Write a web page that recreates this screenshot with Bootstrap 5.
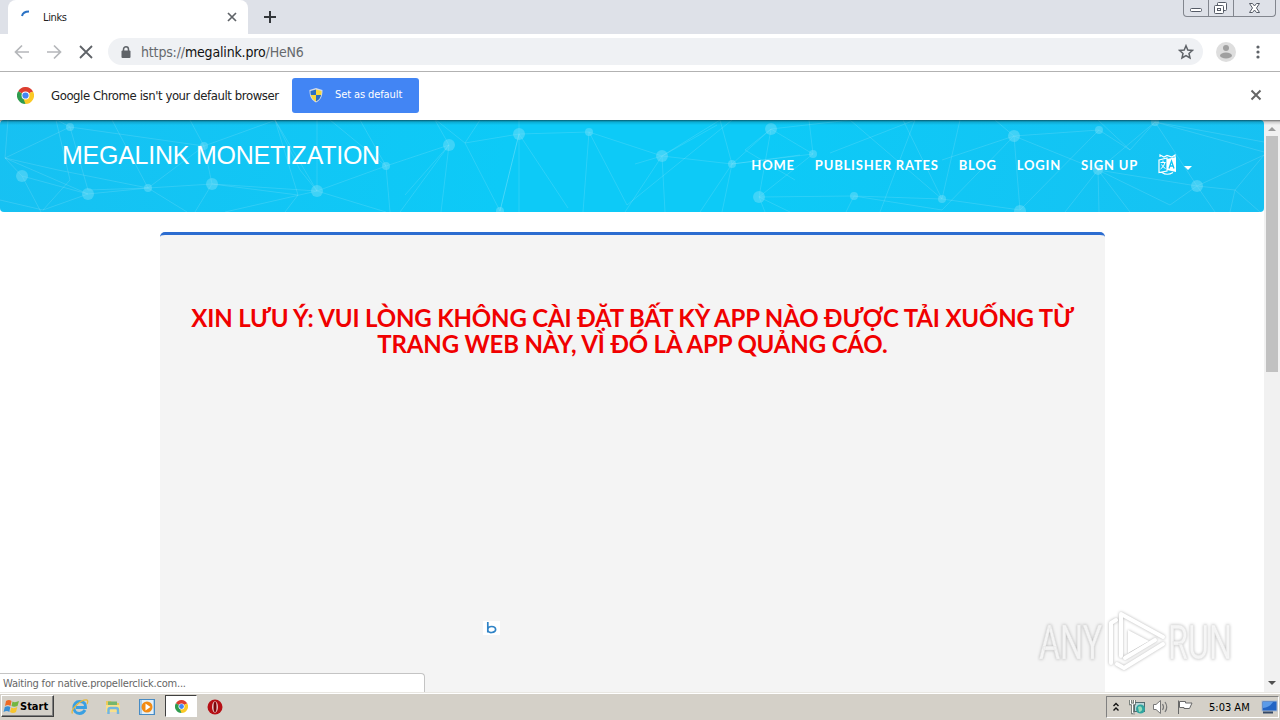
<!DOCTYPE html>
<html lang="vi">
<head>
    <meta charset="UTF-8">
    <meta name="viewport" content="width=device-width, initial-scale=1.0">
    <title>Links</title>
    <link href="https://cdn.jsdelivr.net/npm/bootstrap@5.3.1/dist/css/bootstrap.min.css" rel="stylesheet">
    <script src="https://cdn.jsdelivr.net/npm/bootstrap@5.3.1/dist/js/bootstrap.bundle.min.js"></script>
    <style>
        body { width: 1280px; height: 720px; font-family: "DejaVu Sans Condensed", "DejaVu Sans", sans-serif; font-size: 11px; line-height: 1; color: #222; }
        svg { display: block; flex-shrink: 0; }
        .tab-strip { height: 34px; background: #dee1e8; }
        .tab-item { width: 240px; height: 34px; margin-left: 8px; padding: 0 11px; border-radius: 8px 8px 0 0; background: #fff; }
        .tab-title { margin-left: 11px; letter-spacing: -.35px; }
        .win-buttons { width: 93px; height: 17px; margin-right: 4px; border: 1px solid #82868e; border-top: 0; border-radius: 0 0 4px 4px; }
        .win-buttons > span + span { border-left: 1px solid #82868e; }
        .toolbar { height: 38px; padding-bottom: 2px; border-bottom: 1px solid #b2b2b2; }
        .address { width: 1095px; height: 27px; margin-left: 14px; padding: 0 9px 0 12px; background: #eff1f4; font-size: 14px; letter-spacing: -.16px; color: #66696d; }
        .address b { font-weight: 400; color: #111; }
        .infobar { height: 48px; padding: 0 18px 2px 17px; font-size: 13px; }
        .info-text { width: 241px; margin-left: 17px; letter-spacing: -.42px; white-space: nowrap; }
        .default-btn { width: 127px; height: 35px; padding: 0 0 0 16px; border: 0; border-radius: 3px; background: #4285f4; color: #fff; font-size: 11px; --bs-btn-hover-bg: #3b78e7; }
        .default-btn span { margin-left: 11px; letter-spacing: -.1px; }
        .viewport { height: 572px; }
        .page-shadow { top: 0; left: 0; right: 0; height: 5px; z-index: 3; background: linear-gradient(rgba(0,0,0,.55), rgba(0,0,0,.15) 40%, transparent); }
        .site { width: 1264px; }
        .site-nav { height: 92px; border-radius: 4px; background: linear-gradient(100deg, #17c1f2, #0dcaf7 40%, #0dcaf7 60%, #17c1f2); padding: 0; }
        .site-nav .mesh { top: 0; left: 0; }
        .site-brand { position: relative; margin: -22px 0 0 62px; font: 25px/1 "Liberation Sans", sans-serif; letter-spacing: -.25px; color: #fff; white-space: nowrap; }
        .site-menu { position: relative; margin: -2px 72px 0 0; gap: 20px; font: 700 13px/1 Lato, sans-serif; letter-spacing: .8px; }
        .site-menu a { color: #fff; text-decoration: none; }
        .notice-box { width: 945px; height: 460px; margin: 20px 0 0 160px; border-top: 3px solid #2b6cd0; border-radius: 5px 5px 0 0; background: #f4f4f4; padding: 70px 30px 0; }
        .notice-box h3 { font: 700 24px/26.4px Lato, sans-serif; letter-spacing: -.16px; color: #f00000; }
        .ad-logo { left: 483px; top: 501px; width: 17px; height: 14px; background: #fff; }
        .scroller { width: 16px; background: #f1f1f1; }
        .scroll-thumb { width: 12px; height: 236px; background: #c1c1c1; }
        .status-tip { left: 0; bottom: 0; width: 425px; height: 19px; border: 1px solid #c4c4c4; border-left: 0; border-bottom: 0; border-top-right-radius: 4px; background: #fff; color: #666; padding: 4px 0 0 3px; letter-spacing: -.2px; }
        .watermark { left: 1037px; top: 488px; z-index: 4; }
        .taskbar { height: 28px; background: #d4d0c8; border-top: 1px solid #e9e7e2; box-shadow: inset 0 1px #fff; }
        .start-btn { width: 53px; height: 22px; margin: 2px 0 0 1px; padding-left: 1px; border: 1px solid; border-color: #fff #404040 #404040 #fff; box-shadow: inset -1px -1px #808080; font-weight: 700; color: #000; letter-spacing: 0; }
        .task-icons { margin-left: 17px; }
        .task-active { width: 32px; height: 22px; border: 1px solid; border-color: #404040 #fff #fff #404040; background: #fff; }
        .tray { width: 173px; height: 22px; margin: 3px 1px 0 auto; padding-left: 6px; border: 1px solid; border-color: #808080 #fff #fff #808080; color: #000; }
        .clock { width: 43px; letter-spacing: 0; white-space: nowrap; }
    </style>
</head>
<body class="d-flex flex-column overflow-hidden bg-white">

<svg width="0" height="0" class="position-absolute">
    <symbol id="chrome" viewBox="0 0 18 18">
        <path d="M9 9 1.2 4.5A9 9 0 0 1 16.8 4.5Z" fill="#dd3e30"/>
        <path d="M9 9 16.8 4.5A9 9 0 0 1 9 18Z" fill="#fbc926"/>
        <path d="M9 9 9 18A9 9 0 0 1 1.2 4.5Z" fill="#2f9c4e"/>
        <path d="M9 5H17L16.8 4.500H9Z" fill="#dd3e30"/>
        <path d="M12.500 11 9 18 7 13Z" fill="#fbc926"/>
        <circle cx="9" cy="9" r="4.200" fill="#fff"/>
        <circle cx="9" cy="9" r="3.300" fill="#4285f4"/>
    </symbol>
</svg>

<div class="tab-strip d-flex align-items-start">
    <div class="tab-item d-flex align-items-center">
        <svg width="13" height="14" viewBox="0 0 13 14"><path d="M3 6Q4 1.500 10 1.500" fill="none" stroke="#2a72c4" stroke-width="2"/></svg>
        <span class="tab-title">Links</span>
        <svg class="ms-auto" width="10" height="10" viewBox="0 0 10 10"><path d="M1 1 9 9M9 1 1 9" stroke="#5f6368" stroke-width="1.700"/></svg>
    </div>
    <svg class="mt-2 ms-3" width="12" height="16" viewBox="0 0 12 16"><path d="M6 3V15M0 9H12" stroke="#33363a" stroke-width="2"/></svg>
    <div class="win-buttons ms-auto d-flex">
        <span style="width:24px"><svg width="24" height="16"><rect x="6.500" y="8.500" width="11" height="3" rx="1" fill="#fff" stroke="#555b66"/></svg></span>
        <span style="width:25px"><svg width="24" height="16" fill="#fff" stroke="#555b66"><rect x="8.500" y="2.500" width="9" height="8" rx="1"/><rect x="5.500" y="5.500" width="9" height="8" rx="1"/><rect x="8.500" y="8.500" width="3" height="2"/></svg></span>
        <span class="flex-fill"><svg width="41" height="16"><path d="M15.500 3.500H18.500L20.500 6 22.500 3.500H25.500L22.500 8 25.500 12.500H22.500L20.500 10 18.500 12.500H15.500L18.500 8Z" fill="#fff" stroke="#555b66"/></svg></span>
    </div>
</div>

<div class="toolbar d-flex align-items-center">
    <svg width="94" height="34" viewBox="0 1 94 34" fill="none">
        <path d="M29 18H16M22 11.500 15.500 18 22 24.500M47 18H60M54 11.500 60.500 18 54 24.500" stroke="#b5b7ba" stroke-width="1.700"/>
        <path d="M80 12 92 24M92 12 80 24" stroke="#5f6368" stroke-width="1.800"/>
    </svg>
    <div class="address rounded-pill d-flex align-items-center">
        <svg width="12" height="14" viewBox="0 0 12 14"><path d="M3.500 7V4.500a2.500 2.700 0 0 1 5 0V7" fill="none" stroke="#5f6368" stroke-width="1.500"/><rect x="1.500" y="5.500" width="9" height="7.500" rx="1" fill="#5f6368"/></svg>
        <span style="margin-left:9px">https://<b>megalink.pro</b>/HeN6</span>
        <svg class="ms-auto" width="16" height="16" viewBox="0 0 16 16"><path d="M8 1.700 9.800 6 14.500 6.400 11 9.500 12 14 8 11.600 4 14 5 9.500 1.500 6.400 6.200 6Z" fill="none" stroke="#5f6368" stroke-width="1.500"/></svg>
    </div>
    <svg style="margin-left:12px" width="22" height="22" viewBox="0 0 22 22"><circle cx="11" cy="11" r="10" fill="#dedede"/><circle cx="11" cy="7" r="3" fill="#a0a0a0"/><ellipse cx="11" cy="14.500" rx="6" ry="3" fill="#a0a0a0"/></svg>
    <svg style="margin-left:18px" width="6" height="16" viewBox="0 0 6 16" fill="#5f6368"><circle cx="3" cy="3" r="1.600"/><circle cx="3" cy="8" r="1.600"/><circle cx="3" cy="13" r="1.600"/></svg>
</div>

<div class="infobar d-flex align-items-center">
    <svg width="17" height="17"><use href="#chrome"/></svg>
    <span class="info-text">Google Chrome isn't your default browser</span>
    <button type="button" class="default-btn btn d-flex align-items-center">
        <svg width="16" height="16" viewBox="0 0 16 16">
            <path d="M8 1 14.500 3C14.500 9 13 13 8 15.500 3 13 1.500 9 1.500 3Z" fill="#d5dce8"/>
            <path d="M8 2.500V8H2.800Q2.400 6 2.500 4Z" fill="#2c6fc2"/><path d="M8 2.500V8H13.200Q13.600 6 13.500 4Z" fill="#f8d73a"/>
            <path d="M8 8H2.800Q4 12.500 8 14.500Z" fill="#f8d73a"/><path d="M8 8H13.200Q12 12.500 8 14.500Z" fill="#2c6fc2"/>
        </svg>
        <span>Set as default</span>
    </button>
    <svg class="ms-auto" width="12" height="12" viewBox="0 0 12 12"><path d="M1.500 1.500 10.500 10.500M10.500 1.500 1.500 10.500" stroke="#666" stroke-width="2"/></svg>
</div>

<div class="viewport d-flex position-relative overflow-hidden">
    <div class="page-shadow position-absolute"></div>
    <div class="site">
        <nav class="site-nav d-flex align-items-center justify-content-between position-relative overflow-hidden">
            <svg class="mesh position-absolute" width="1264" height="92" viewBox="0 120 1264 92">
                <g id="meshLines" stroke="#fff" stroke-opacity=".13" fill="none">
                    <path d="M8 120 5 158 22 176 41 212M5 158 70 127 57 120M5 158 58 170 148 188 88 194 22 176M5 158 88 194 43 210 0 200M43 210 70 180 56 120M70 127 88 190 148 188 204 146 212 184 148 188 187 212M70 127 204 146 190 120M204 146 276 120M112 120 148 188M212 184 195 212M212 184 317 191 225 212M212 184 298 195 275 120 317 191 386 166 330 120M317 191 386 212M298 195 285 212M386 166 360 120M386 166 449 145 400 212M386 166 390 212M275 120 300 170 317 191M317 120 317 191"/>
                    <path d="M449 145 441 212M449 145 405 195M436 120 465 143 500 211 519 134 465 143 480 120M449 145 435 120M519 134 589 132 662 156M519 134 568 208M519 120V134 212M519 134 500 211M589 132 583 212M589 132 627 205 732 120M662 156 625 212M662 156 635 164 M662 156 732 164 720 120 662 156 665 212M662 156 717 125M732 164 771 129 813 154 732 164 700 212M732 164 722 212M732 164 800 155M771 129 745 150 795 180M771 129 759 197 765 212M759 197 854 196M759 197 790 212M813 154 809 120M813 154 759 197M771 129 850 120 942 199"/>
                    <path d="M830 153 915 120 880 212M903 120 942 199 854 196 846 212M854 196 942 210 1014 136 942 160M942 199 960 120M1014 136 1099 130 1020 210 942 199M1014 136 995 120M1014 136 1020 210M1014 136 1098 170 1155 122 1264 152M1099 130 1130 150 1155 122 1197 186 1264 155M1155 122 1264 142M1098 170 1065 212M1098 170 1099 212M1098 170 1130 212M1098 170 1170 205 1197 186 1235 190 1264 155M1197 186 1215 212M1235 190 1230 212M1235 190 1260 212M1098 170 1197 186M1130 150 1098 120"/>
                </g>
                <g id="meshNodes" fill="#7be0f8" fill-opacity=".45"></g>
            </svg>
            <div class="site-brand">MEGALINK MONETIZATION</div>
            <div class="site-menu d-flex align-items-center">
                <a href="#">HOME</a>
                <a href="#">PUBLISHER RATES</a>
                <a href="#">BLOG</a>
                <a href="#">LOGIN</a>
                <a href="#">SIGN UP</a>
                <a href="#" class="d-flex align-items-center">
                    <svg width="19" height="22" viewBox="0 0 19 22">
                        <path d="M9 5 18 3V18L9 16Z" fill="#fff"/>
                        <path d="M1 6 9 4V17L1 18.500ZM2 3V1L6 3 9 1.500 14 3 17 1V3M4 18.500Q9 22 15 18.500" fill="none" stroke="#fff" stroke-width="1.200"/>
                        <path d="M2.500 8.500H7.500M5 6.500V8.500M7 8.500Q6 13 2.500 15M3.500 10.500Q5 13.500 7.500 14.500" fill="none" stroke="#fff"/>
                        <path d="M11 14.500 13.500 7 16 14.500M12 12H15" fill="none" stroke="#13c4f4" stroke-width="1.300"/>
                    </svg>
                    <svg style="margin:5px 0 0 7px" width="8" height="4" viewBox="0 0 8 4"><path d="M0 0H8L4 4Z" fill="#fff"/></svg>
                </a>
            </div>
        </nav>
        <div class="notice-box text-center">
            <h3>XIN LƯU Ý: VUI LÒNG KHÔNG CÀI ĐẶT BẤT KỲ APP NÀO ĐƯỢC TẢI XUỐNG TỪ TRANG WEB NÀY, VÌ ĐÓ LÀ APP QUẢNG CÁO.</h3>
        </div>
    </div>
    <div class="scroller d-flex flex-column align-items-center">
        <svg width="16" height="16"><path d="M4 11 8 7 12 11Z" fill="#9b9b9b"/></svg>
        <div class="scroll-thumb"></div>
        <svg class="mt-auto" width="16" height="16"><path d="M4 5 8 9 12 5Z" fill="#505050"/></svg>
    </div>
    <div class="ad-logo position-absolute"><svg width="17" height="14"><path d="M4.800 1V11.500M4.800 8.300Q5 5.500 8.700 5.500T12.600 8.300 8.700 11.500 4.800 8.300" fill="none" stroke="#2f83c6" stroke-width="1.700"/></svg></div>
    <div class="status-tip position-absolute">Waiting for native.propellerclick.com...</div>
    <svg class="watermark position-absolute" width="210" height="68" viewBox="0 0 210 68">
        <g style="filter:drop-shadow(0 0 1.500px rgba(0,0,0,.3))">
            <g font-family="Roboto, sans-serif" font-size="49" fill="#fff" fill-opacity=".8" stroke="#e6e6e6" stroke-width=".6">
                <text transform="translate(2 51) scale(.66 1)">ANY</text>
                <text transform="translate(131 51) scale(.66 1)">RUN</text>
            </g>
            <g fill="none" stroke="#fff" stroke-width="4" stroke-linejoin="round" stroke-linecap="round">
                <path d="M74 55V15L79 12M84 48V6L126 29M126 36 87 60 80 56M88 50 118 32"/>
            </g>
            <path d="M91 22V45L112 33Z" fill="#fff"/>
        </g>
    </svg>
</div>

<div class="taskbar d-flex align-items-start">
    <div class="start-btn d-flex align-items-center">
        <svg width="17" height="17" viewBox="0 0 17 17">
            <path d="M3 3Q6 1 8.500 3L7.500 8Q5 6 2 8Z" fill="#ee6a25"/><path d="M9.500 3.500Q12 5 16 3L14.500 8Q11 9.500 8.500 8Z" fill="#73b642"/>
            <path d="M1.800 9Q5 7.500 7.300 9L6.300 14Q4 12 .6 14Z" fill="#378ed6"/><path d="M8.300 9.500Q11 11 14.300 9L13 14Q10 16 7 14Z" fill="#f7c52e"/>
        </svg>
        <span>Start</span>
    </div>
    <div class="task-icons d-flex align-items-center mt-1">
        <svg width="18" height="18" viewBox="0 0 18 18" fill="none"><path d="M14 12Q12 15.500 8.500 15.500C1 15.500 1 3.500 8.500 3.500Q15 3.500 14.500 9.500H5" stroke="#3aa0e2" stroke-width="3"/><path d="M1.500 15.500C-1 12 10 1 16 2 17 2.500 17 4 16 6" stroke="#e6b83d" stroke-width="1.300"/></svg>
        <svg style="margin-left:16px" width="16" height="18" viewBox="0 0 16 18"><path d="M1 3H6L7 5H14V14H1Z" fill="#edc95b"/><path d="M3 3.500H12V7H3Z" fill="#75b66d"/><path d="M1 7H15V14H1Z" fill="#f8e08b"/><path d="M3.500 16V12Q3.500 10 5.500 10H11Q13 10 13 12V16" fill="none" stroke="#70b6e1" stroke-width="2.400"/></svg>
        <svg style="margin-left:18px" width="16" height="18" viewBox="0 0 16 18"><rect x=".5" y="1.500" width="15" height="15" fill="#a8cdec" stroke="#478bc4"/><rect x="3" y="2" width="11" height="14" fill="#e5f0f7"/><circle cx="8" cy="9" r="5.500" fill="#f38b13"/><path d="M6.500 5.500V12.500L11.500 9Z" fill="#fff"/></svg>
        <div class="task-active d-flex align-items-center justify-content-center" style="margin:-2px 0 0 10px"><svg width="13" height="13"><use href="#chrome"/></svg></div>
        <svg style="margin-left:10px" width="16" height="18" viewBox="0 0 16 18"><circle cx="8" cy="9" r="7.500" fill="#b60f15"/><ellipse cx="8" cy="9" rx="3" ry="5.800" fill="#e9c7c7"/><ellipse cx="8" cy="9" rx="1.500" ry="5.200" fill="#7c070b"/></svg>
    </div>
    <div class="tray d-flex align-items-center">
        <svg width="6" height="12" viewBox="0 0 6 12"><path d="M.5 5 3 2.500 5.500 5M.5 9.500 3 7 5.500 9.500" fill="none" stroke="#111" stroke-width="1.400"/></svg>
        <svg style="margin-left:10px" width="17" height="18" viewBox="0 0 17 18"><rect x="5.500" y="4.500" width="10" height="9" fill="#b8d7d9" stroke="#536b70"/><circle cx="11.500" cy="11" r="4.500" fill="#30a5a0"/><path d="M9 9Q12 7 13 10T10 14" fill="#96dbb9"/><path d="M1.500 2V6H5.500V2M3.500 6V15H6" fill="none" stroke="#59635f" stroke-width="2.400"/><path d="M1.500 2V6H5.500V2M3.500 6V15H6" fill="none" stroke="#fff"/></svg>
        <svg style="margin-left:6px" width="18" height="18" viewBox="0 0 18 18"><path d="M1.500 6.500H4L8.500 2.500V15.500L4 11.500H1.500Z" fill="#fff" stroke="#777"/><path d="M10.500 6Q12.500 9 10.500 12M13 4Q16.500 9 13 14" fill="none" stroke="#777" stroke-width="1.200"/></svg>
        <svg style="margin-left:6px" width="18" height="18" viewBox="0 0 18 18"><path d="M2.500 2.500V16M3.500 3.500H9.500V5H16L13.500 10.500H8V9.500H3.500Z" fill="#fff" stroke="#686868"/></svg>
        <span class="clock" style="margin-left:15px">5:03 AM</span>
        <svg class="ms-auto" width="17" height="18" viewBox="0 0 17 18"><rect x="1" y="3" width="15" height="10" fill="#2264c4" stroke="#a8b9d0"/><path d="M2 4H12Q9 9 2 10Z" fill="#5b9be9"/><path d="M2 14.500H12" stroke="#344967" stroke-width="2"/></svg>
    </div>
</div>

<script>
    const nodes = [
        [70, 127, 4], [22, 176, 6], [88, 194, 6], [148, 188, 4], [212, 184, 6], [204, 146, 4], [317, 191, 6], [386, 166, 4],
        [449, 145, 6], [519, 134, 6], [589, 132, 4], [500, 211, 4], [662, 156, 6], [732, 164, 4], [771, 129, 6], [813, 154, 4],
        [759, 197, 6], [854, 196, 4], [942, 199, 4], [1014, 136, 6], [1099, 130, 4], [1020, 211, 6], [1098, 170, 5], [1155, 122, 4], [1197, 186, 6]
    ];
    document.getElementById('meshNodes').innerHTML = nodes
        .map(([x, y, r]) => `<circle cx="${x}" cy="${y}" r="${r}"/>`)
        .join('');
</script>
</body>
</html>
